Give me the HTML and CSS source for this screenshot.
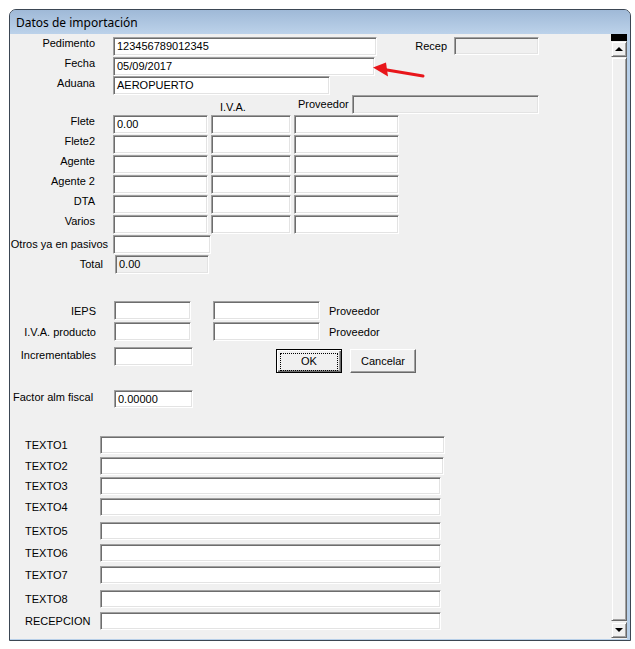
FILE: index.html
```html
<!DOCTYPE html>
<html lang="es">
<head>
  <meta charset="UTF-8">
  <title>Datos de importación</title>
  <link rel="stylesheet" href="styles.css">
</head>
<body>

  <div class="window">
    <div class="titlebar">Datos de importación</div>

    <div class="client">
      <div class="form">

        <!-- cabecera -->
        <div class="row first">
          <span class="lbl">Pedimento</span>
          <div class="field w-ped">123456789012345</div>
          <span class="lbl-recep">Recep</span>
          <div class="field off w-recep"></div>
        </div>
        <div class="row">
          <span class="lbl">Fecha</span>
          <div class="field w-fecha">05/09/2017</div>
        </div>
        <div class="row short">
          <span class="lbl">Aduana</span>
          <div class="field w-aduana">AEROPUERTO</div>
        </div>

        <div class="head-row">
          <span class="h-iva">I.V.A.</span>
          <span class="h-prov">Proveedor</span>
          <div class="field off w-prov"></div>
        </div>

        <!-- importes -->
        <div class="grid">
          <span class="g-lbl">Flete</span>
          <div class="field">0.00</div><div class="field"></div><div class="field"></div>

          <span class="g-lbl">Flete2</span>
          <div class="field"></div><div class="field"></div><div class="field"></div>

          <span class="g-lbl">Agente</span>
          <div class="field"></div><div class="field"></div><div class="field"></div>

          <span class="g-lbl">Agente 2</span>
          <div class="field"></div><div class="field"></div><div class="field"></div>

          <span class="g-lbl">DTA</span>
          <div class="field"></div><div class="field"></div><div class="field"></div>

          <span class="g-lbl">Varios</span>
          <div class="field"></div><div class="field"></div><div class="field"></div>

          <span class="g-lbl lbl-otros">Otros ya en pasivos</span>
          <div class="field span2 w-otros"></div>

          <span class="g-lbl lbl-total">Total</span>
          <div class="field off span2 w-total">0.00</div>
        </div>

        <!-- impuestos -->
        <div class="row tax first-tax">
          <span class="lbl lbl-tax">IEPS</span>
          <div class="field w-small"></div>
          <div class="field w-prov2"></div>
          <span class="txt-prov">Proveedor</span>
        </div>
        <div class="row tax">
          <span class="lbl lbl-tax">I.V.A. producto</span>
          <div class="field w-small"></div>
          <div class="field w-prov2"></div>
          <span class="txt-prov">Proveedor</span>
        </div>
        <div class="row tax incr">
          <span class="lbl lbl-tax">Incrementables</span>
          <div class="field w-incr"></div>
          <div class="buttons">
            <button class="btn default"><span class="focus">OK</span></button>
            <button class="btn">Cancelar</button>
          </div>
        </div>

        <div class="row factor">
          <span class="lbl-factor">Factor alm fiscal</span>
          <div class="field w-incr h18">0.00000</div>
        </div>

        <!-- textos -->
        <div class="texts">
          <div class="t-row"><span class="t-lbl">TEXTO1</span><div class="field t-field w-t1"></div></div>
          <div class="t-row tight"><span class="t-lbl">TEXTO2</span><div class="field t-field w-t2"></div></div>
          <div class="t-row tighter"><span class="t-lbl">TEXTO3</span><div class="field t-field"></div></div>
          <div class="t-row tight"><span class="t-lbl">TEXTO4</span><div class="field t-field"></div></div>
          <div class="t-row wide"><span class="t-lbl">TEXTO5</span><div class="field t-field"></div></div>
          <div class="t-row"><span class="t-lbl">TEXTO6</span><div class="field t-field"></div></div>
          <div class="t-row"><span class="t-lbl">TEXTO7</span><div class="field t-field"></div></div>
          <div class="t-row wide"><span class="t-lbl">TEXTO8</span><div class="field t-field"></div></div>
          <div class="t-row"><span class="t-lbl">RECEPCION</span><div class="field t-field"></div></div>
        </div>
      </div>

      <div class="vscroll">
        <div class="sb-cap"></div>
        <div class="sb-btn"><span class="tri up"></span></div>
        <div class="sb-thumb"></div>
        <div class="sb-btn"><span class="tri down"></span></div>
      </div>

      <svg class="arrow" width="58" height="20" viewBox="0 0 58 20">
        <line x1="14" y1="9.6" x2="53" y2="16" stroke="#e8161b" stroke-width="3" stroke-linecap="round"/>
        <polygon points="3,7.5 16,2.5 18,16.5" fill="#e8161b"/>
      </svg>
    </div>
  </div>

</body>
</html>
```

FILE: styles.css
```css
body {
  margin: 0;
  padding: 0;
  background-color: #fff;
  font-family: 'Liberation Sans', Arial, sans-serif;
  font-size: 11px;
  color: #000;
}

.window {
  margin: 9px 0 0 9px;
  width: 620px;
  border: 1px solid #3b4653;
  border-radius: 7px 7px 0 0;
  background-color: #b7cfe8;
}

.titlebar {
  height: 24px;
  padding-left: 6px;
  line-height: 25px;
  font-family: 'Noto Sans', 'Open Sans', sans-serif;
  font-size: 12px;
  border-radius: 6px 6px 0 0;
  background: linear-gradient(#9fb9d7, #bcd2ea);
}

.client {
  position: relative;
  display: flex;
  width: 617px;
  height: 605px;
  margin-bottom: 1px;
  background-color: #f0f0f0;
}

.form {
  flex: 1;
}

/* campos tipo edit de windows */
.field {
  box-sizing: border-box;
  height: 19px;
  padding-left: 3px;
  line-height: 16px;
  white-space: nowrap;
  background-color: #fff;
  border: 1px solid;
  border-color: #a0a0a0 #fff #fff #a0a0a0;
  box-shadow: inset 1px 1px 0 #6d6d6d, inset -1px -1px 0 #e3e3e3;
}

.field.off {
  background-color: #f0f0f0;
}

.h18 {
  height: 18px;
}

.row {
  display: flex;
  align-items: center;
  height: 20px;
}

.row.first {
  margin-top: 2px;
}

.row.short {
  height: 19px;
}

.lbl {
  width: 85px;
  margin-right: 18px;
  text-align: right;
}

/* en la cabecera las etiquetas van un poco arriba */
.row .lbl {
  align-self: flex-start;
  line-height: 14px;
}

.row.tax .lbl {
  align-self: center;
  line-height: normal;
}

.row.incr .lbl {
  align-self: flex-start;
  line-height: 17px;
}

.w-ped { width: 264px; }
.w-fecha { width: 262px; }
.w-aduana { width: 217px; }

.lbl-recep {
  width: 70px;
  text-align: right;
}

.w-recep {
  width: 85px;
  height: 18px;
  margin-left: 7px;
}

.head-row {
  display: flex;
  align-items: flex-start;
  height: 20px;
  padding-left: 210px;
}

.h-iva {
  width: 78px;
  padding-top: 6px;
}

.h-prov {
  width: 54px;
  padding-top: 3px;
}

.w-prov {
  width: 187px;
}

.grid {
  display: grid;
  grid-template-columns: 100px 95px 80px 105px;
  grid-auto-rows: 20px;
  column-gap: 3px;
  align-items: start;
}

.g-lbl {
  grid-column: 1;
  padding-right: 15px;
  line-height: 13px;
  text-align: right;
}

.lbl-otros {
  padding-right: 2px;
  line-height: 19px;
}

.lbl-total {
  padding-right: 7px;
  line-height: 19px;
}

.span2 {
  grid-column: 2 / span 2;
}

.w-otros { width: 98px; }

.w-total {
  width: 94px;
  margin-left: 2px;
}

.tax {
  height: 19px;
  margin-top: 2px;
}

.first-tax {
  margin-top: 26px;
}

.lbl-tax {
  width: 86px;
}

.w-small { width: 77px; }
.w-incr { width: 79px; }

.w-prov2 {
  width: 107px;
  margin-left: 22px;
}

.txt-prov {
  margin-left: 9px;
}

.row.incr {
  align-items: flex-start;
  height: auto;
  margin-top: 6px;
}

.buttons {
  display: flex;
  gap: 8px;
  margin: 2px 0 0 83px;
}

.btn {
  box-sizing: border-box;
  width: 66px;
  height: 24px;
  padding: 0;
  font-family: 'Liberation Sans', Arial, sans-serif;
  font-size: 11px;
  color: #000;
  background-color: #f0f0f0;
  border: 1px solid;
  border-color: #fff #696969 #696969 #fff;
  box-shadow: inset -1px -1px 0 #a0a0a0;
}

.btn.default {
  border: 1px solid #000;
  box-shadow: inset 1px 1px 0 #fff, inset -1px -1px 0 #696969, inset -2px -2px 0 #a0a0a0;
  padding: 3px;
}

.btn .focus {
  display: block;
  height: 16px;
  line-height: 15px;
  border: 1px dotted #000;
}

.row.factor {
  align-items: flex-start;
  height: 18px;
  margin-top: 17px;
}

.row.factor .lbl-factor {
  width: 101px;
  padding-left: 3px;
  line-height: 15px;
}

.texts {
  margin-top: 28px;
}

.t-row {
  display: flex;
  align-items: center;
  height: 18px;
  margin-top: 4px;
}

.t-row:first-child { margin-top: 0; }
.t-row.tight { margin-top: 3px; }
.t-row.tighter { margin-top: 2px; }
.t-row.wide { margin-top: 6px; }

.t-lbl {
  width: 75px;
  padding-left: 15px;
}

.t-field {
  width: 341px;
  height: 18px;
}

.w-t1 { width: 345px; }
.w-t2 { width: 344px; }

/* barra de desplazamiento */
.vscroll {
  display: flex;
  flex-direction: column;
  width: 16px;
}

.sb-cap {
  height: 7px;
  background-color: #000;
}

.sb-btn,
.sb-thumb {
  box-sizing: border-box;
  display: flex;
  align-items: center;
  justify-content: center;
  background-color: #f0f0f0;
  border: 1px solid;
  border-color: #f0f0f0 #696969 #696969 #f0f0f0;
  box-shadow: inset 1px 1px 0 #fff, inset -1px -1px 0 #a0a0a0;
}

.sb-btn {
  height: 16px;
}

.sb-thumb {
  flex: 1;
  margin-bottom: 1px;
}

.sb-btn:last-child {
  margin-bottom: 1px;
}

.tri {
  width: 0;
  height: 0;
  border-left: 4px solid transparent;
  border-right: 4px solid transparent;
}

.tri.up {
  border-bottom: 4px solid #000;
}

.tri.down {
  border-top: 4px solid #000;
}

.arrow {
  position: absolute;
  left: 360px;
  top: 26px;
}
```
